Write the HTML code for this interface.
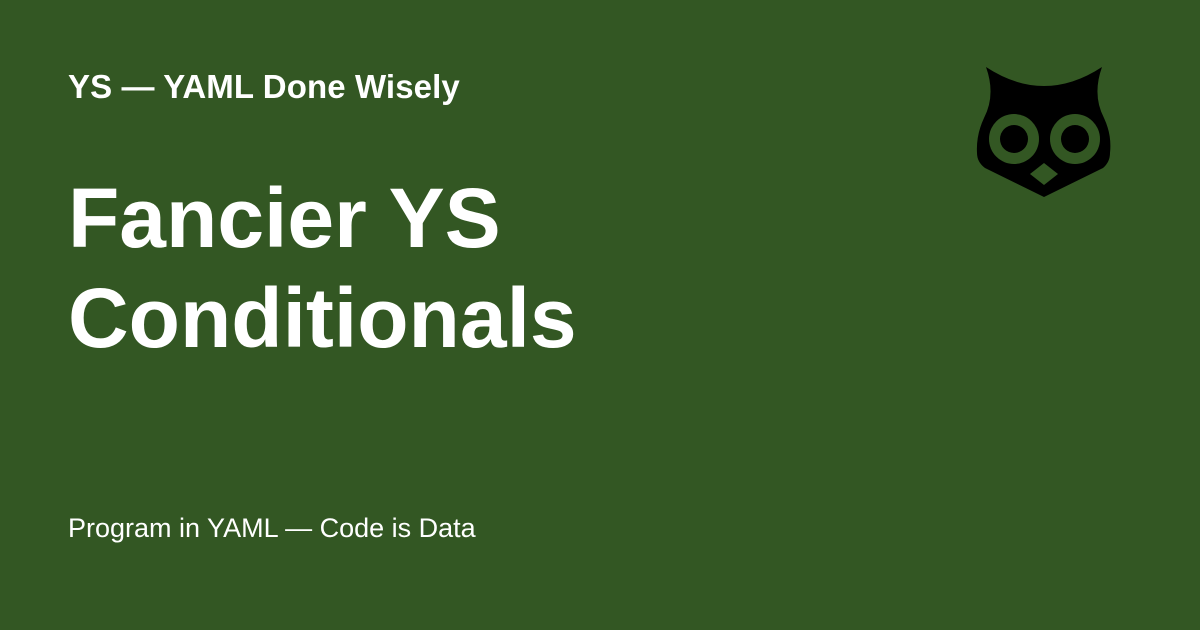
<!DOCTYPE html>
<html><head><style>
html,body{margin:0;padding:0}
body{width:1200px;height:630px;background:#335723;position:relative;overflow:hidden;font-family:"Liberation Sans",sans-serif;color:#fff}
.t{position:absolute;left:68px;white-space:nowrap}
#a{top:68px;font-size:33px;font-weight:bold;letter-spacing:0.1px}
#b{top:168px;font-size:84px;font-weight:bold;line-height:100px;letter-spacing:0}
#c{top:513px;font-size:27px}
</style></head><body>
<div class="t" id="a">YS — YAML Done Wisely</div>
<div class="t" id="b">Fancier YS<br>Conditionals</div>
<div class="t" id="c">Program in YAML — Code is Data</div>
<svg width="1200" height="630" style="position:absolute;left:0;top:0">
<path d="M986 67 Q1044 105 1102 67 Q1092 95 1104 118 Q1112 135 1110 153 Q1110 162 1103 168 L1044 197 L985 168 Q977 162 977 153 Q976 135 984 118 Q996 95 986 67 Z" fill="#000"/>
<circle cx="1014" cy="139" r="25" fill="#335723"/>
<circle cx="1014" cy="139" r="14" fill="#000"/>
<circle cx="1075" cy="139" r="25" fill="#335723"/>
<circle cx="1075" cy="139" r="14" fill="#000"/>
<path d="M1044 163 L1058 174 L1044 185 L1030 174 Z" fill="#335723"/>
</svg>
</body></html>
